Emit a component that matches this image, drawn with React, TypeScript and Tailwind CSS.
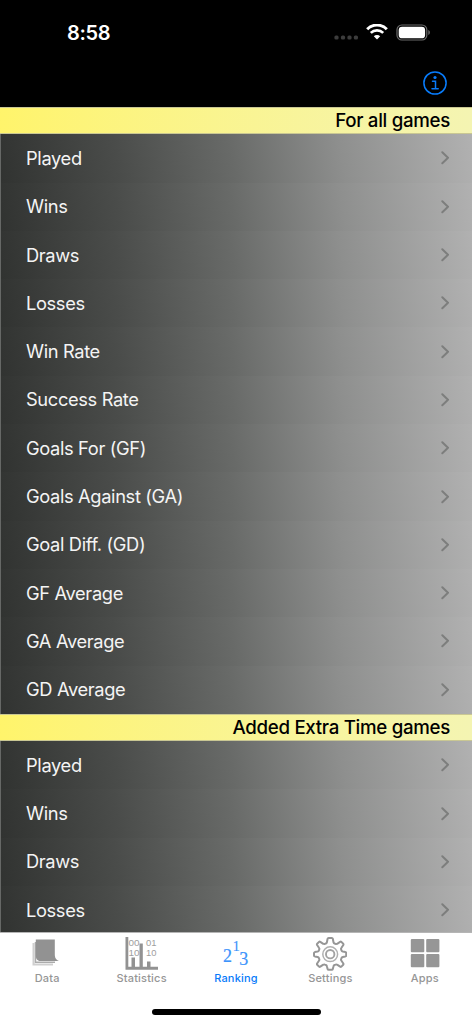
import React from "react";

const ALL_GAMES = [
  "Played",
  "Wins",
  "Draws",
  "Losses",
  "Win Rate",
  "Success Rate",
  "Goals For (GF)",
  "Goals Against (GA)",
  "Goal Diff. (GD)",
  "GF Average",
  "GA Average",
  "GD Average",
];

const EXTRA_TIME = ["Played", "Wins", "Draws", "Losses"];

function StatusBar() {
  return (
    <div className="flex h-[64px] shrink-0 items-center justify-between pl-[67px] pr-[41px]">
      <span className="pt-px text-[20px] font-semibold leading-6 tracking-[-0.3px]">8:58</span>
      <div className="flex items-center">
        <svg className="mt-[11px] h-[5px] w-[25px]" viewBox="0 0 25 5" fill="#3c3c3c">
          <rect x="1.4" y="0.5" width="4.2" height="4" rx="1.6" />
          <rect x="7.9" y="0.5" width="4.2" height="4" rx="1.6" />
          <rect x="14.4" y="0.5" width="4.2" height="4" rx="1.6" />
          <rect x="20.8" y="0.5" width="4.2" height="4" rx="1.6" />
        </svg>
        <svg className="ml-[8px] h-[16px] w-[22px]" viewBox="0 0 22 16" fill="none" stroke="#fff">
          <path d="M1.2 5.2a13.8 13.8 0 0 1 19.6 0" strokeWidth="3" />
          <path d="M4.8 8.9a8.8 8.8 0 0 1 12.4 0" strokeWidth="2.7" />
          <path d="M11 15.6 7.8 12.3a4.6 4.6 0 0 1 6.4 0z" fill="#fff" stroke="none" />
        </svg>
        <svg className="ml-[8px] h-[17px] w-[35px]" viewBox="0 0 35 17">
          <rect x="1" y="1" width="29.8" height="15" rx="4.8" fill="none" stroke="#6a6a6a" strokeWidth="1.2" />
          <rect x="2.7" y="2.7" width="26.4" height="11.6" rx="3.4" fill="#fff" />
          <path d="M32.3 6v5c1-.4 1.6-1.4 1.6-2.5S33.3 6.4 32.3 6z" fill="#6a6a6a" />
        </svg>
      </div>
    </div>
  );
}

function SectionHeader({ title }: { title: string }) {
  return (
    <div className="flex h-[27.3px] shrink-0 items-center justify-end border-y border-[#c9c793] bg-linear-to-r from-[#fff46b] to-[#f4f4b2] pr-[22px] text-[18.7px] font-[530] leading-6 tracking-[-0.3px] text-black">
      {title}
    </div>
  );
}

function Row({ label }: { label: string }) {
  return (
    <div className="flex h-[48.3px] shrink-0 items-center justify-between border-l border-[#666866] bg-[linear-gradient(80deg,#313331_0%,#4a4c4a_25%,#686a68_49%,#8e8f8e_72%,#b1b1b1_100%)] pl-[25px] pr-[22px]">
      <span className="pb-px text-[18.3px] font-[380] leading-6 tracking-[-0.36px] text-[#f4f4f4]">{label}</span>
      <svg className="h-[14px] w-[9px]" viewBox="0 0 9 14" fill="none" stroke="#7d7e7d">
        <path d="M1.3 1.2 7 6.7 1.3 12.2" strokeWidth="2" strokeLinecap="round" strokeLinejoin="round" />
      </svg>
    </div>
  );
}

function DataIcon() {
  return (
    <svg className="h-[34px] w-[34px]" viewBox="0 0 34 34">
      <path d="M3.5 6v21.5h19.5" fill="none" stroke="#cfcfcf" strokeWidth="2" />
      <path d="M5.5 5v20.2h19.5" fill="none" stroke="#ababab" strokeWidth="1.5" />
      <path d="M5.8 2.5H24.8v14.5c0 4 1.2 5.7 4.2 7H10.5C7 24 5.8 21.5 5.8 18z" fill="#929292" />
    </svg>
  );
}

function StatisticsIcon() {
  return (
    <svg className="h-[34px] w-[34px]" viewBox="0 0 34 34" fill="#929292">
      <g fill="#9e9e9e" fontFamily="'Liberation Sans', sans-serif" fontSize="8.8">
        <text x="3.5" y="8.8" textLength="11" lengthAdjust="spacingAndGlyphs">00</text>
        <text x="21" y="8.8" textLength="10.5" lengthAdjust="spacingAndGlyphs">01</text>
        <text x="3.5" y="19" textLength="11" lengthAdjust="spacingAndGlyphs">10</text>
        <text x="21" y="19" textLength="10.5" lengthAdjust="spacingAndGlyphs">10</text>
      </g>
      <path d="M.5 0h2.8v29.8H33v3H.5z" />
      <path d="M6.5 20.5h3.5V30H6.5zM14.5 6.5h3.3V30h-3.3zM22 24.5h3.5V30H22z" />
    </svg>
  );
}

function RankingIcon() {
  return (
    <svg className="h-[34px] w-[34px]" viewBox="0 0 34 34" fill="#3b93fb" fontFamily="'Liberation Serif', serif">
      <text x="4" y="24.8" fontSize="18" stroke="#3b93fb" strokeWidth=".2">2</text>
      <text x="13.7" y="13.8" fontSize="14" stroke="#3b93fb" strokeWidth=".2">1</text>
      <text x="20.3" y="27.5" fontSize="18" stroke="#3b93fb" strokeWidth=".2">3</text>
    </svg>
  );
}

function SettingsIcon() {
  return (
    <svg className="h-[34px] w-[34px]" viewBox="0 0 34 34" fill="none" stroke="#969696">
      <path
        d="M15.6 1h3.2q.8 0 1 .8l.7 3.5q.2.9 1 1.2l1 .4q.9.4 1.6-.1l3-2q.7-.4 1.3.1l1.8 1.8q.5.6.1 1.3l-2 3q-.5.7-.1 1.6l.4 1q.3.8 1.2 1l2.6.5q.8.2.8 1v2.3q0 .8-.8 1l-2.6.5q-.9.2-1.2 1l-.4 1q-.4.9.1 1.6l2 3q.4.7-.1 1.3l-1.8 1.8q-.6.5-1.3.1l-3-2q-.7-.5-1.6-.1l-1 .4q-.8.3-1 1.2l-.7 2.7q-.2.8-1 .8h-3.2q-.8 0-1-.8l-.7-2.7q-.2-.9-1-1.2l-1-.4q-.9-.4-1.6.1l-3 2q-.7.4-1.3-.1l-1.8-1.8q-.5-.6-.1-1.3l2-3q.5-.7.1-1.6l-.4-1q-.3-.8-1.2-1l-2.8-.5q-.8-.2-.8-1v-2.3q0-.8.8-1l2.8-.5q.9-.2 1.2-1l.4-1q.4-.9-.1-1.6l-2-3q-.4-.7.1-1.3l1.8-1.8q.6-.5 1.3-.1l3 2q.7.5 1.6.1l1-.4q.8-.3 1-1.2l.7-3.5q.2-.8 1-.8z"
        strokeWidth="2"
        strokeLinejoin="round"
      />
      <circle cx="17.2" cy="17.2" r="7.4" stroke="#b0b0b0" strokeWidth="1.5" />
      <circle cx="17.2" cy="17.2" r="4.2" stroke="#a2a2a2" strokeWidth="1.9" />
    </svg>
  );
}

function AppsIcon() {
  return (
    <svg className="h-[34px] w-[34px]" viewBox="0 0 34 34" fill="#969696">
      <rect x="2.8" y="2" width="13.5" height="13.2" rx="1" />
      <rect x="18.2" y="2" width="13.2" height="13.2" rx="1" />
      <rect x="2.8" y="16.9" width="13.5" height="13.3" rx="1" />
      <rect x="18.2" y="16.9" width="13.2" height="13.3" rx="1" />
    </svg>
  );
}

const TABS = [
  { label: "Data", icon: <DataIcon /> },
  { label: "Statistics", icon: <StatisticsIcon /> },
  { label: "Ranking", icon: <RankingIcon />, active: true },
  { label: "Settings", icon: <SettingsIcon /> },
  { label: "Apps", icon: <AppsIcon /> },
];

export default function App() {
  return (
    <div className="flex h-screen w-full flex-col overflow-hidden bg-black font-['Inter',sans-serif] text-white">
      <StatusBar />
      <div className="flex h-[43px] shrink-0 justify-end pr-[25px] pt-[7px]">
        <button className="h-6 w-6" aria-label="Info">
          <svg className="h-6 w-6" viewBox="0 0 24 24" fill="none" stroke="#087bfa" strokeWidth="1.5">
            <circle cx="12" cy="12" r="11.1" />
            <path d="M9.5 10.2h3v7.2M9 17.7h6.2" strokeLinecap="round" />
            <circle cx="12" cy="6.5" r="1.6" fill="#087bfa" stroke="none" />
          </svg>
        </button>
      </div>

      {/* Ranking categories */}
      <div className="flex min-h-0 flex-1 flex-col overflow-hidden">
        <SectionHeader title="For all games" />
        {ALL_GAMES.map((label) => (
          <Row key={label} label={label} />
        ))}
        <SectionHeader title="Added Extra Time games" />
        {EXTRA_TIME.map((label) => (
          <Row key={label} label={label} />
        ))}
      </div>

      {/* Tab bar */}
      <div className="flex h-[92px] shrink-0 flex-col items-center border-t border-[#b5b5b5] bg-white">
        <div className="grid w-full grid-cols-5">
          {TABS.map((tab) => (
            <button key={tab.label} className="flex flex-col items-center pt-[4px]">
              {tab.icon}
              <span
                className={
                  tab.active
                    ? "text-[11px] font-medium leading-[15px] tracking-[0.2px] text-[#087bfa]"
                    : "text-[11px] font-medium leading-[15px] tracking-[0.2px] text-[#969696]"
                }
              >
                {tab.label}
              </span>
            </button>
          ))}
        </div>
        <div className="mt-[23px] h-[6px] w-[169px] rounded-full bg-black" />
      </div>
    </div>
  );
}
